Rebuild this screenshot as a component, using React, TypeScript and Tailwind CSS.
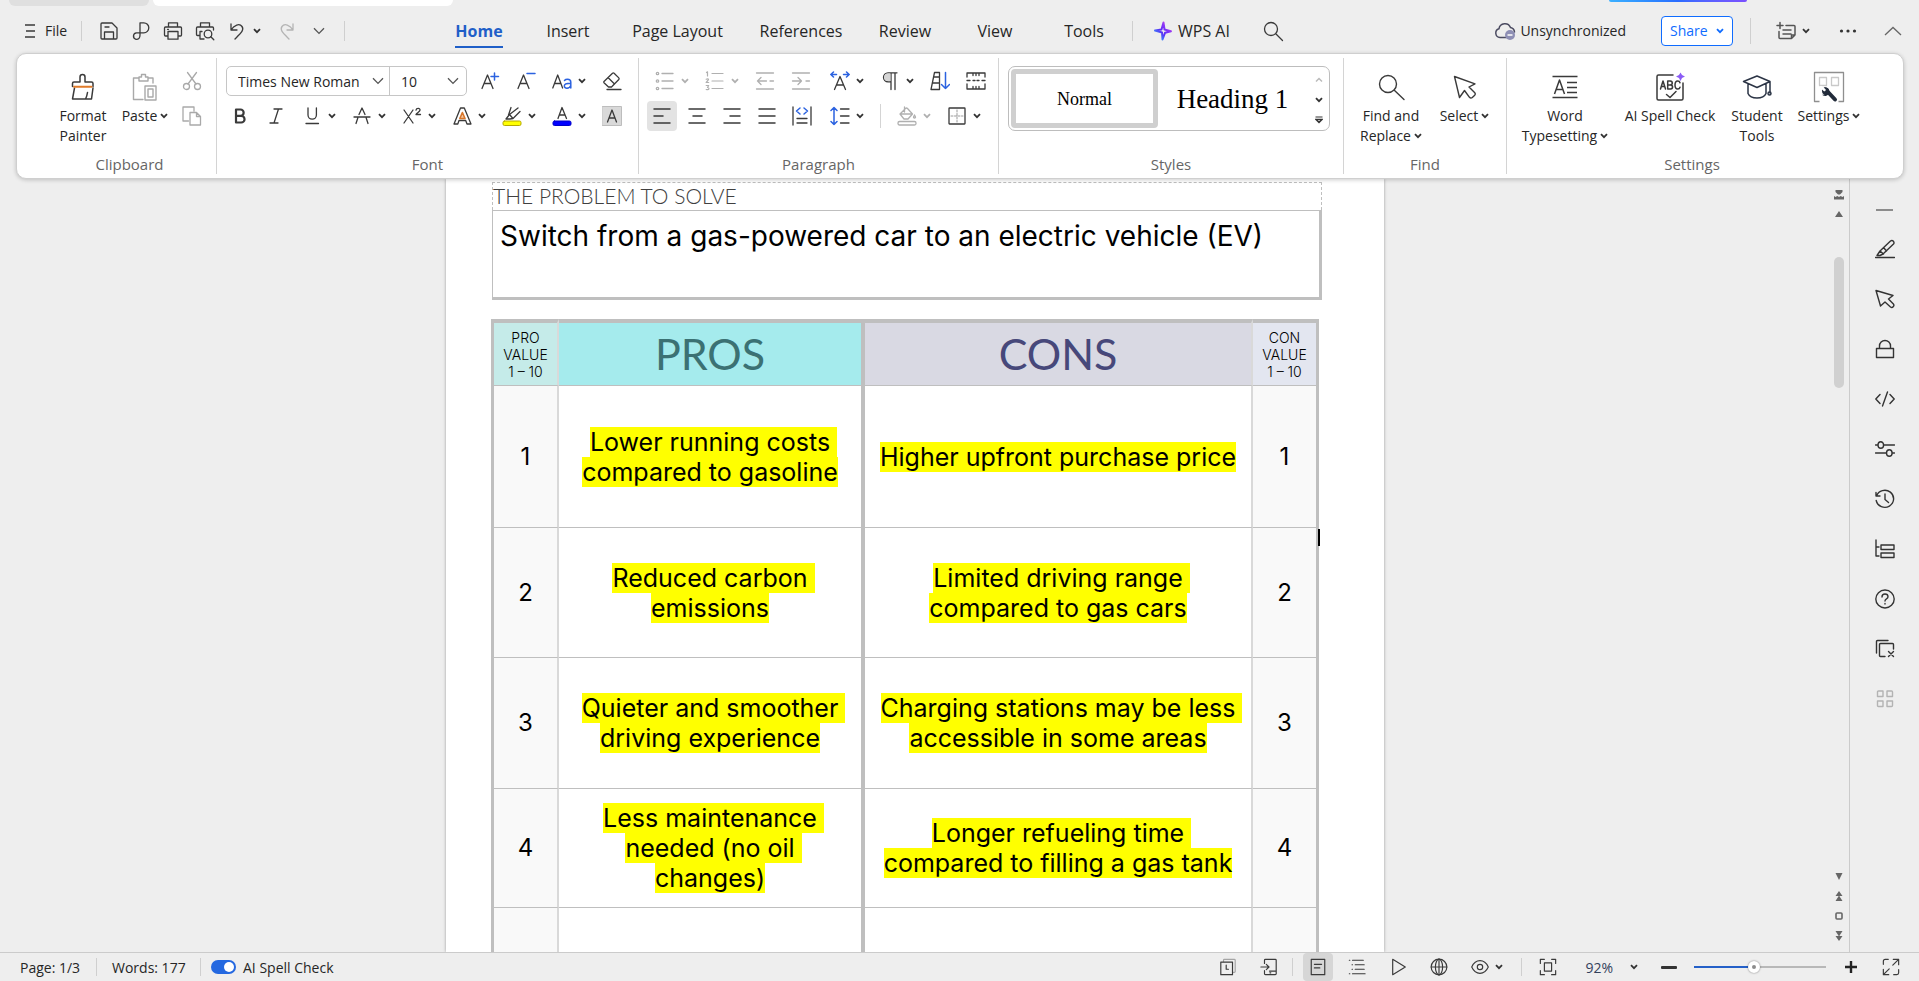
import React from "react";
import type { ReactNode } from "react";

type IconProps = {
  size?: number;
  vb?: number;
  sw?: number;
  className?: string;
  children: ReactNode;
};

function Icon({ size = 20, vb = 20, sw = 1.3, className = "text-[#3a3a3a]", children }: IconProps) {
  return (
    <svg
      width={size}
      height={size}
      viewBox={`0 0 ${vb} ${vb}`}
      fill="none"
      stroke="currentColor"
      strokeWidth={sw}
      strokeLinecap="round"
      strokeLinejoin="round"
      className={`shrink-0 ${className}`}
      aria-hidden="true"
    >
      {children}
    </svg>
  );
}

function Chevron({ className = "text-[#333]" }: { className?: string }) {
  return (
    <svg width="8" height="6" viewBox="0 0 8 6" fill="none" stroke="currentColor" strokeWidth="1.8" className={`shrink-0 ${className}`} aria-hidden="true">
      <path d="M1 1.2 4 4.2 7 1.2" />
    </svg>
  );
}

function WideChevron({ className = "" }: { className?: string }) {
  return (
    <svg width="12" height="8" viewBox="0 0 12 8" fill="none" stroke="#555" strokeWidth="1.3" className={`shrink-0 ${className}`} aria-hidden="true">
      <path d="M1 1.2 6 6.4 11 1.2" />
    </svg>
  );
}

function Tool({ label, drop = false, dim = false, children }: { label: string; drop?: boolean; dim?: boolean; children: ReactNode }) {
  return (
    <button type="button" aria-label={label} className="flex h-[30px] shrink-0 items-center gap-[6px]">
      {children}
      {drop && <Chevron className={dim ? "text-[#b0b0b0]" : "text-[#333]"} />}
    </button>
  );
}

function BigButton({ icon, lines, drop = false, width }: { icon: ReactNode; lines: string[]; drop?: boolean; width: string }) {
  return (
    <button type="button" className={`flex shrink-0 flex-col items-center gap-[3px] pt-[5px] text-[14px] leading-5 text-[#262626] ${width}`}>
      <span className="flex h-8 items-center">{icon}</span>
      <span className="flex flex-col items-center whitespace-nowrap">
        {lines.map((line, i) => (
          <span key={line} className="flex items-center gap-[3px]">
            {line}
            {drop && i === lines.length - 1 && <Chevron />}
          </span>
        ))}
      </span>
    </button>
  );
}

function Group({ label, className, labelClass = "", last = false, children }: { label: string; className: string; labelClass?: string; last?: boolean; children: ReactNode }) {
  return (
    <section aria-label={label} className={`my-1 flex shrink-0 flex-col pt-2 ${last ? "" : "border-r border-[#d4d4d4]"} ${className}`}>
      {children}
      <div className={`mt-auto text-center text-[15px] leading-5 text-[#666] ${labelClass}`}>{label}</div>
    </section>
  );
}

const tabs: [string, string][] = [
  ["Insert", "w-[88px]"],
  ["Page Layout", "w-[131px]"],
  ["References", "w-[116px]"],
  ["Review", "w-[92px]"],
  ["View", "w-[88px]"],
  ["Tools", "w-[90px]"],
];

function MenuBar() {
  return (
    <div className="flex h-[47px] items-center pt-[2px] pr-[17px] text-[#262626]">
      <div className="flex w-[434px] shrink-0 items-center pl-5">
        <button type="button" className="flex items-center gap-[5px] text-[14px]">
          <Icon sw={1.5}>
            <path d="M5 4h10M6 10h9M5 16h10" strokeLinecap="butt" />
          </Icon>
          File
        </button>
        <span className="ml-[14px] h-5 w-px bg-[#cfcfcf]" />
        <div className="ml-[17px] flex items-center gap-3">
          <button type="button" aria-label="Save">
            <Icon>
              <path d="M2 17V3q0-1 1-1h10l5 5v10q0 1-1 1H3q-1 0-1-1ZM5.500 18v-7h9v7M6 6h4" />
            </Icon>
          </button>
          <button type="button" aria-label="Export to PDF">
            <Icon>
              <path d="M9 14V1.800h3.800a5 5 0 0 1 0 10H5.500a3.300 3.300 0 0 0-.500 6.500Q9 18.500 9 14M3 16v.500" />
            </Icon>
          </button>
          <button type="button" aria-label="Print">
            <Icon>
              <path d="M5.500 6V1.800h9V6M5 15H2.500q-1 0-1-1V7q0-1 1-1h15q1 0 1 1v7q0 1-1 1H15M5 10.500h10v7.700H5ZM4.500 8.300h1" />
            </Icon>
          </button>
          <button type="button" aria-label="Print preview">
            <Icon>
              <path d="M5.500 6V1.800h9V6M4.500 14.500H2.500q-1 0-1-1V7q0-1 1-1h15q1 0 1 1v2M5 18V10.500h2M5 18h4" />
              <circle cx="13" cy="13" r="3.800" />
              <path d="m15.800 15.800 3 3" />
            </Icon>
          </button>
          <button type="button" aria-label="Undo" className="flex items-center gap-[6px]">
            <Icon>
              <path d="M4 3v6h6M4 9C7 4 12.500 2 15 5.500S14 12 8 18" />
            </Icon>
            <Chevron />
          </button>
        </div>
        <button type="button" aria-label="Redo" className="ml-4">
          <Icon className="text-[#b4b4b4]">
            <path d="M16 3v6h-6M16 9C13 4 7.500 2 5 5.500S6 12 12 18" />
          </Icon>
        </button>
        <button type="button" aria-label="More commands" className="ml-[16px]">
          <WideChevron />
        </button>
        <span className="ml-[19px] h-5 w-px bg-[#cfcfcf]" />
      </div>
      <nav className="flex items-center text-[16px]" aria-label="Ribbon tabs">
        <button type="button" className="flex w-[90px] justify-center font-bold text-[#1f5fc8]">
          <span className="border-b-2 border-[#1f5fc8] pt-[5px] pb-[3px]">Home</span>
        </button>
        {tabs.map(([t, w]) => (
          <button type="button" key={t} className={`whitespace-nowrap ${w}`}>
            {t}
          </button>
        ))}
      </nav>
      <span className="ml-[3px] h-5 w-px bg-[#cfcfcf]" />
      <button type="button" className="ml-5 flex shrink-0 items-center gap-[5px] text-[16px]">
        <svg width="20" height="20" viewBox="0 0 20 20" aria-hidden="true" fill="none">
          <defs>
            <linearGradient id="spark" x1="0" y1="1" x2="1" y2="0">
              <stop offset="0" stopColor="#2fc4ff" />
              <stop offset="0.450" stopColor="#5b2cf5" />
              <stop offset="0.700" stopColor="#8a35f7" />
              <stop offset="1" stopColor="#ff6bd0" />
            </linearGradient>
          </defs>
          <path d="M10.500 1.500 8.500 8.500 2 9.500 9 11.500 9.500 18.500 12 11.800 18 10.200 11.500 8.500Z" stroke="url(#spark)" strokeWidth="2" strokeLinejoin="round" />
        </svg>
        WPS AI
      </button>
      <button type="button" aria-label="Search" className="ml-8">
        <Icon size={22} vb={22}>
          <circle cx="9" cy="9" r="6.500" />
          <path d="m14 14 6.500 6.500" />
        </Icon>
      </button>
      <div className="ml-auto flex items-center text-[14px]">
        <button type="button" className="flex items-center gap-1">
          <svg width="22" height="20" viewBox="0 0 22 20" fill="none" aria-hidden="true">
            <path d="M12 16.500H6A4.500 4.500 0 0 1 5 7.700 6 6 0 0 1 16.500 6.500 5 5 0 0 1 20.500 11" stroke="#4a4a60" strokeWidth="1.500" strokeLinecap="round" />
            <circle cx="16" cy="14" r="5" fill="#8e8fb5" />
            <path d="M13.500 14h5" stroke="#fff" strokeWidth="1.500" />
          </svg>
          Unsynchronized
        </button>
        <button type="button" className="ml-[35px] flex h-[30px] w-[72px] items-center justify-between rounded-[4px] border border-[#0f6cff] bg-white px-[8px] text-[#0f6cff]">
          Share
          <Chevron className="text-[#0f6cff]" />
        </button>
        <span className="ml-[17px] h-[26px] w-px bg-[#cfcfcf]" />
        <button type="button" aria-label="Notes" className="ml-[25px] flex items-center gap-[6px]">
          <Icon className="text-[#555]" sw={1.5}>
            <path d="M1 4.500h6M4 1.500v6M10 4.500h8q1 0 1 1V14l-3.500 3.500H4q-1 0-1-1V10.500M7 9h8M7 13h8M19 14h-3.500v3.500" />
          </Icon>
          <Chevron />
        </button>
        <button type="button" aria-label="More" className="ml-[29px]">
          <svg width="18" height="4" viewBox="0 0 18 4" fill="#333" aria-hidden="true">
            <circle cx="2.500" cy="2" r="1.600" />
            <circle cx="9" cy="2" r="1.600" />
            <circle cx="15.500" cy="2" r="1.600" />
          </svg>
        </button>
        <button type="button" aria-label="Collapse ribbon" className="ml-[27px]">
          <svg width="18" height="10" viewBox="0 0 18 10" fill="none" stroke="#666" strokeWidth="1.300" aria-hidden="true">
            <path d="m1 9 8-7.500L17 9" />
          </svg>
        </button>
      </div>
    </div>
  );
}

function ClipboardGroup() {
  return (
    <Group label="Clipboard" className="w-[200px]" labelClass="pl-[26px]">
      <div className="flex gap-[14px] pl-[41px]">
        <BigButton
          width="w-[50px]"
          lines={["Format", "Painter"]}
          icon={
            <Icon size={28} vb={28} sw={1.5}>
              <path d="M3.500 13.500V10.500q0-1.500 1.500-1.500h6V4a2.500 2.500 0 0 1 5 0v5h6.500q1.500 0 1.500 1.500v3M5.500 15 3.500 26h19l1.500-11M16.500 26q1.500-3 2-6.500" />
              <path d="M5 13.700h17.500" stroke="#e07b2a" strokeWidth="2" />
            </Icon>
          }
        />
        <BigButton
          width="w-[46px]"
          lines={["Paste"]}
          drop
          icon={
            <Icon size={28} vb={28} sw={1.4} className="text-[#a9a9a9]">
              <path d="M7 5H2.500v21.500H12M17.500 5H22v5M8 8V4h2.500V1.500h4V4H17v4ZM14 13h11v14H14ZM17 16h5v8h-5Z" />
            </Icon>
          }
        />
        <div className="flex flex-col gap-[5px]">
          <Tool label="Cut">
            <Icon className="text-[#a9a9a9]">
              <circle cx="4.500" cy="15.500" r="3" />
              <circle cx="15.500" cy="15.500" r="3" />
              <path d="M5.500 1.500 14 13M14.500 1.500 6 13" />
            </Icon>
          </Tool>
          <Tool label="Copy">
            <Icon className="text-[#a9a9a9]">
              <path d="M6.500 15H1V1h11v4M8 6.500h6.500l4 4V19H8ZM14.500 6.500v4h4" />
            </Icon>
          </Tool>
        </div>
      </div>
    </Group>
  );
}

function FontGroup() {
  return (
    <Group label="Font" className="w-[422px]">
      <div className="flex items-center gap-4 pl-[9px]">
        <div className="-mr-[3px] flex h-[30px] w-[241px] items-center rounded-[5px] border border-[#c6c6c6] bg-white text-[14px] text-[#262626]">
          <div className="relative flex h-full w-[163px] items-center border-r border-[#c6c6c6]">
            <select aria-label="Font" className="h-full w-full appearance-none bg-transparent pl-[11px] outline-none">
              <option>Times New Roman</option>
            </select>
            <WideChevron className="pointer-events-none absolute right-[5px]" />
          </div>
          <div className="relative flex h-full flex-1 items-center">
            <select aria-label="Font size" className="h-full w-full appearance-none bg-transparent pl-[11px] outline-none">
              <option>10</option>
            </select>
            <WideChevron className="pointer-events-none absolute right-[7px]" />
          </div>
        </div>
        <Tool label="Grow font">
          <Icon>
            <path d="M2 17.500 7.500 4 13 17.500M4 12.500h7" />
            <path d="M14.500 2v7M11 5.500h7.500" stroke="#2b62e0" strokeWidth="1.500" />
          </Icon>
        </Tool>
        <Tool label="Shrink font">
          <Icon>
            <path d="M2 17.500 7.500 4 13 17.500M4 12.500h7" />
            <path d="M11 2.500h8" stroke="#2b62e0" strokeWidth="1.500" />
          </Icon>
        </Tool>
        <Tool label="Change case" drop>
          <Icon>
            <path d="M.800 17 5.700 4l4.900 13M2.600 12.500h6.200" />
            <path d="M12.500 9.500q1-1.200 3-1.200 3.300 0 3.300 3V17M18.800 12.300c-4 0-6.500.500-6.500 2.700 0 3 5 3 6.500-.500" stroke="#2b62e0" strokeWidth="1.500" />
          </Icon>
        </Tool>
        <Tool label="Clear formatting">
          <Icon>
            <path d="m2 10.500 8.500-8.300q.800-.700 1.600 0l4.700 4.700q.700.800 0 1.600L9.500 16H6.500L2 11.800q-.600-.600 0-1.300ZM6 6.500l6.500 6.500M5 18.500h14" />
          </Icon>
        </Tool>
      </div>
      <div className="mt-[5px] flex items-center gap-4 pl-[13px]">
        <Tool label="Bold">
          <Icon sw={2.2}>
            <path d="M6 3.500h4.500a3 3 0 0 1 0 6.300H6ZM6 9.800h5.200a3.300 3.300 0 0 1 0 6.700H6Z" />
          </Icon>
        </Tool>
        <Tool label="Italic">
          <Icon>
            <path d="M8 3h8M4 17h8M12.500 3l-4.500 14" />
          </Icon>
        </Tool>
        <Tool label="Underline" drop>
          <Icon>
            <path d="M6 2v7a4.200 4.200 0 0 0 8.400 0V2M4 17.500h12.500" />
          </Icon>
        </Tool>
        <Tool label="Strikethrough" drop>
          <Icon>
            <path d="M7 8.500 10 2l3 6.500M2 11h16M5.800 12 4 17.500M14.200 12l1.800 5.500" />
          </Icon>
        </Tool>
        <Tool label="Superscript" drop>
          <Icon>
            <path d="m2 4 9 13M11 4 2 17M14 4.200c.500-2.700 4.300-2.300 4 0-.200 1.800-3.500 2.500-4 4.300h4.500" />
          </Icon>
        </Tool>
        <Tool label="Text effects" drop>
          <Icon>
            <path d="M8.500 2h3.800L19 18h-4l-1.300-3.500H7L5.800 18H2Z" />
            <path d="m10.400 6.500 2.600 6H7.800Z" stroke="#d9772b" strokeWidth="1.600" fill="#f5c9a5" />
          </Icon>
        </Tool>
        <Tool label="Highlight colour" drop>
          <Icon>
            <path d="M4 13 7.500 8.500 16 2M7.500 8.500l3.500 4L18 5.500M4 13h4l3-.500M9 1.500 6.500 9" />
            <rect x="1" y="15" width="18" height="4.500" rx="1.500" fill="#ffff00" stroke="#b5a800" strokeWidth="1" />
          </Icon>
        </Tool>
        <Tool label="Font colour" drop>
          <Icon>
            <path d="M6 12.500 10 1.500l4.500 11M7.500 9h5.500" />
            <rect x="1" y="15" width="18" height="4.500" rx="1.500" fill="#0000ff" stroke="#0000c8" strokeWidth="1" />
          </Icon>
        </Tool>
        <Tool label="Character shading">
          <Icon>
            <rect x=".500" y=".500" width="19" height="19" fill="#d9d9d9" stroke="#bdbdbd" strokeWidth="1" />
            <path d="M5.500 16 10 4l4.500 12M7 12h6" />
          </Icon>
        </Tool>
      </div>
    </Group>
  );
}

const alignments: [string, string][] = [
  ["Align left", "M2 3h16M2 10h9M2 17h16"],
  ["Centre", "M2 3h16M6 10h9M2 17h16"],
  ["Align right", "M2 3h16M8 10h10M2 17h16"],
  ["Justify", "M2 3h16M2 10h16M2 17h16"],
];

function ParagraphGroup() {
  return (
    <Group label="Paragraph" className="w-[360px]">
      <div className="flex items-center gap-4 pl-4">
        <Tool label="Bullets" drop dim>
          <Icon className="text-[#b0b0b0]">
            <path d="M7 2.500h11M7 10h11M7 17.500h11" />
            <circle cx="2.500" cy="2.500" r="1.200" />
            <circle cx="2.500" cy="10" r="1.200" />
            <circle cx="2.500" cy="17.500" r="1.200" />
          </Icon>
        </Tool>
        <Tool label="Numbering" drop dim>
          <Icon className="text-[#b0b0b0]" sw={1.2}>
            <path d="M7 2.500h11M7 10h11M7 17.500h11M1.500 1.500l1-.700V5M1.200 8.200q2.300-1 2.300.500L1.200 11.500h2.500M1.200 14.500h2.500l-1.200 2q1.500 0 1.500 1.200-.500 1.500-2.800.800" />
          </Icon>
        </Tool>
        <Tool label="Decrease indent">
          <Icon className="text-[#b0b0b0]">
            <path d="M1.500 2h17M1.500 18h17M11.500 10H2.500M6 6.500 2.500 10 6 13.500M15 10h3.500" />
          </Icon>
        </Tool>
        <Tool label="Increase indent">
          <Icon className="text-[#b0b0b0]">
            <path d="M1.500 2h17M1.500 18h17M1.500 10h9M7 6.500l3.500 3.500L7 13.500M15 10h3.500" />
          </Icon>
        </Tool>
        <div className="ml-[3px] flex items-center gap-4">
          <Tool label="Text scaling" drop>
            <Icon>
              <path d="M4.500 18.500 10 5.500l5.500 13M6.500 14h7" />
              <path d="M6.500 3.500H.800M3.500 1 .800 3.500 3.500 6M13.500 3.500h5.700M16.500 1l2.700 2.500L16.500 6" stroke="#2b62e0" strokeWidth="1.500" />
            </Icon>
          </Tool>
          <Tool label="Paragraph marks" drop>
            <Icon>
              <path d="M11 18.500V1.800M15 18.500V1.800M17 1.800H8a4.500 4.500 0 0 0 0 9h3" />
              <path d="M10.500 2.500H8a3.800 3.800 0 0 0 0 7.600h2.500Z" fill="#d5d5d5" stroke="none" />
            </Icon>
          </Tool>
          <Tool label="Sort">
            <Icon>
              <path d="M1 18.500 4.500 1.500h5v17ZM4 6h5.500M3 12h6.500" />
              <path d="M15.500 1.500v16M11.500 13.500l4 4 4-4" stroke="#2b62e0" strokeWidth="1.500" />
            </Icon>
          </Tool>
          <Tool label="Tabs">
            <Icon>
              <path d="M1 6V2h18v4M1 13v5h18v-5M1 9.500h3M7 9.500h2M11 9.500h2M16 9.500h3M7 2v2.500M13 2v2.500M7 18v-2.500M10 18v-2.500M13 18v-2.500M10 2v2.500" />
            </Icon>
          </Tool>
        </div>
      </div>
      <div className="mt-[5px] flex items-center gap-[5px] pl-[8px]">
        {alignments.map(([name, d], i) => (
          <button
            type="button"
            key={name}
            aria-label={name}
            aria-pressed={i === 0}
            className={`flex size-[30px] items-center justify-center rounded-[4px] ${i === 0 ? "bg-[#e3e3e3]" : ""}`}
          >
            <Icon sw={1.5}>
              <path d={d} />
            </Icon>
          </button>
        ))}
        <button type="button" aria-label="Distribute" className="flex size-[30px] items-center justify-center">
          <Icon>
            <path d="M1 1v18M19 1v18M5 12.500h10M5 17h10" />
            <path d="M8 2 4.500 5 8 8M12 2l3.500 3L12 8" stroke="#2b62e0" strokeWidth="1.500" />
          </Icon>
        </button>
        <div className="ml-2 flex items-center gap-4">
          <Tool label="Line spacing" drop>
            <Icon>
              <path d="M10.500 3h8.500M10.500 10h8.500M10.500 17h8.500" />
              <path d="M4 1.500v17M1 4.500l3-3 3 3M1 15.500l3 3 3-3" stroke="#2b62e0" strokeWidth="1.500" />
            </Icon>
          </Tool>
          <span className="h-6 w-px bg-[#d4d4d4]" />
          <Tool label="Shading" drop dim>
            <Icon className="text-[#b0b0b0]">
              <path d="M8.500 2.500 3 8l4 5h4l4.500-5-5-5.500q-1-1-2 0ZM7.500 1v5M4 8h11M17.500 9q2 3 0 3t0-3" />
              <rect x="1" y="15.500" width="18" height="3.500" rx="1.500" />
            </Icon>
          </Tool>
          <Tool label="Borders" drop>
            <Icon>
              <rect x="2" y="2" width="16" height="16" rx=".500" />
              <path d="M10 4v12M4 10h12" stroke="#9a9a9a" strokeWidth="1" strokeDasharray="2 1.500" />
            </Icon>
          </Tool>
        </div>
      </div>
    </Group>
  );
}

function StylesGroup() {
  return (
    <Group label="Styles" className="w-[345px]">
      <div className="ml-[9px] flex h-[65px] w-[322px] rounded-[7px] border border-[#bdbdbd] p-[2px] font-['Liberation_Serif',serif] text-black">
        <button type="button" className="w-[147px] rounded-[4px] border-[5px] border-[#cfcfcf] pt-[2px] text-[18px]">
          Normal
        </button>
        <button type="button" className="w-[149px] pt-[2px] text-[27px] whitespace-nowrap">
          Heading 1
        </button>
        <div className="flex flex-1 flex-col items-center justify-between pt-[8px] pb-[4px] pl-[3px]">
          <button type="button" aria-label="Previous styles">
            <svg width="8" height="6" viewBox="0 0 8 6" fill="none" stroke="#bbb" strokeWidth="1.500" aria-hidden="true">
              <path d="M1 4.500 4 1.500l3 3" />
            </svg>
          </button>
          <button type="button" aria-label="Next styles" className="flex h-2 items-center">
            <Chevron />
          </button>
          <button type="button" aria-label="All styles">
            <svg width="8" height="8" viewBox="0 0 8 8" fill="none" stroke="#333" strokeWidth="1.500" aria-hidden="true">
              <path d="M.500 1h7" stroke="#777" />
              <path d="M1 3.500h6l-3 3Z" />
            </svg>
          </button>
        </div>
      </div>
    </Group>
  );
}

function FindGroup() {
  return (
    <Group label="Find" className="w-[163px]">
      <div className="flex gap-[16px] pl-[16px]">
        <BigButton
          width="w-[62px]"
          lines={["Find and", "Replace"]}
          drop
          icon={
            <Icon size={28} vb={28} sw={1.4}>
              <circle cx="11" cy="11" r="8.500" />
              <path d="M17.300 17.300 27 26.500" />
            </Icon>
          }
        />
        <BigButton
          width="w-[53px]"
          lines={["Select"]}
          drop
          icon={
            <Icon size={28} vb={28} sw={1.4}>
              <path d="m3.500 3.500 5 21 5-7 5 6.800q1.300 1.500 2.800.200l2.400-2.200q1.200-1.300.100-2.600L18 14l6-3.200Z" />
            </Icon>
          }
        />
      </div>
    </Group>
  );
}

function SettingsGroup() {
  return (
    <Group label="Settings" className="w-[370px]" last>
      <div className="flex gap-[14px] pl-[14px]">
        <BigButton
          width="w-[88px]"
          lines={["Word", "Typesetting"]}
          drop
          icon={
            <Icon size={28} vb={28} sw={1.5}>
              <path d="M1.500 3.500h25M1.500 24.500h25M3.500 21 8.500 7l5 14M5.300 16.500h6.400M16 9.500h10M16 14.500h10M16 19.500h10" strokeLinecap="butt" />
            </Icon>
          }
        />
        <BigButton
          width="w-[94px]"
          lines={["AI Spell Check"]}
          icon={
            <Icon size={30} vb={30} sw={1.5}>
              <path d="M18 3H3.500Q2 3 2 4.500v22Q2 28 3.500 28h23q1.500 0 1.500-1.500V11M11.500 22.500l3.500 3 6-6" />
              <path d="M5.500 17 8 9l2.500 8M6.200 14.500h3.600M12.700 9h2.600q2 .200 2 2t-2 2h-2.600ZM12.700 13h2.900q2 .200 2 2t-2 2h-2.900ZM25 10.800q-.500-1.800-2.200-1.800Q20 9 20 13t2.800 4q1.700 0 2.200-1.800" />
              <path d="M25.500.500 27 3l3 1.500L27 6l-1.500 3L24 6l-3-1.500L24 3Z" fill="#8b5cf6" stroke="none" />
            </Icon>
          }
        />
        <BigButton
          width="w-[52px]"
          lines={["Student", "Tools"]}
          icon={
            <Icon size={30} vb={30} sw={1.5} className="text-[#2b3445]">
              <path d="M15 4 28 9.500 15 15.500 1.500 9.500ZM6 12v9.500q2 4.500 9 4.500t9-4.500V12M28 9.500V21" />
              <circle cx="27.500" cy="21.500" r="1.500" />
            </Icon>
          }
        />
        <BigButton
          width="w-[64px]"
          lines={["Settings"]}
          drop
          icon={
            <Icon size={32} vb={32} sw={1.3} className="text-[#8f8f8f]">
              <path d="M6.500 30.500H1.500v-29h29v29h-5" strokeLinecap="butt" />
              <path d="M6.500 6.500h7v8h-7ZM18.500 6.500h7v8h-7Z" stroke="#c9c9c9" />
              <path d="m14.500 20.500 7.500 8" stroke="#222b3a" strokeWidth="4" />
              <path d="M11 16.500a4.300 4.300 0 1 1-1.800 7.300l1.800-.300 1.300-1.300-.500-2.200-2 .300-1-.800Z" fill="#222b3a" stroke="none" />
              <circle cx="12.500" cy="20" r="3.500" fill="#222b3a" stroke="none" />
              <path d="m8 16 3.500 3" stroke="#fff" strokeWidth="2.500" />
            </Icon>
          }
        />
      </div>
    </Group>
  );
}

type Row = { n: number; height: string; pro: string[]; con: string[] };

const rows: Row[] = [
  { n: 1, height: "h-[142px]", pro: ["Lower running costs", "compared to gasoline"], con: ["Higher upfront purchase price"] },
  { n: 2, height: "h-[130px]", pro: ["Reduced carbon", "emissions"], con: ["Limited driving range", "compared to gas cars"] },
  { n: 3, height: "h-[131px]", pro: ["Quieter and smoother", "driving experience"], con: ["Charging stations may be less", "accessible in some areas"] },
  { n: 4, height: "h-[119px]", pro: ["Less maintenance", "needed (no oil", "changes)"], con: ["Longer refueling time", "compared to filling a gas tank"] },
];

function Marked({ lines }: { lines: string[] }) {
  return (
    <div className="flex flex-col items-center text-[25px] leading-[30px] whitespace-nowrap text-black">
      {lines.map((line, i) => (
        <mark key={line} className={`bg-[#ffff00] text-black ${i < lines.length - 1 ? "-mr-[7px] pr-[7px]" : ""}`}>
          {line}
        </mark>
      ))}
    </div>
  );
}

function DocumentPage() {
  return (
    <article className="w-[938px] shrink-0 bg-white pt-[3px] pr-[62px] pl-[45px] font-['Inter',sans-serif] shadow-[0_0_3px_rgba(0,0,0,0.35)]">
      <h2 className="ml-px h-7 border border-b-0 border-dashed border-[#bfbfbf] font-['Lato',sans-serif] text-[21px] leading-[25px] font-light text-[#404040]">
        THE PROBLEM TO SOLVE
      </h2>
      <p className="ml-px h-[90px] border border-r-[3px] border-b-[3px] border-[#bfbfbf] pt-[6px] pl-[7px] text-[28px] leading-[38px] text-black">
        Switch from a gas-powered car to an electric vehicle (EV)
      </p>
      <div className="relative mt-[19px] w-[828px]">
        <table className="w-full table-fixed border-separate border-spacing-0 text-center">
          <colgroup>
            <col className="w-[68px]" />
            <col className="w-[306px]" />
            <col />
            <col className="w-[66px]" />
          </colgroup>
          <thead>
            <tr className="h-[67px]">
              <th className="border-t-4 border-r-2 border-b border-l-[3px] border-[#bfbfbf] border-r-[#d9d9d9] bg-[#c5ebe9] p-0 text-[14px] leading-[17px] font-light">
                PRO
                <br />
                VALUE
                <br />1 – 10
              </th>
              <th className="border-t-4 border-r-4 border-b border-[#bfbfbf] bg-[#a5ebed] p-0 font-['Lato',sans-serif] text-[43px] leading-[50px] font-normal text-[#3b7173]">PROS</th>
              <th className="border-t-4 border-r-2 border-b border-[#bfbfbf] border-r-[#d9d9d9] bg-[#d9d9e3] p-0 font-['Lato',sans-serif] text-[43px] leading-[50px] font-normal text-[#47487a]">CONS</th>
              <th className="border-t-4 border-r-[3px] border-b border-[#bfbfbf] bg-[#e3e6f0] p-0 text-[14px] leading-[17px] font-light">
                CON
                <br />
                VALUE
                <br />1 – 10
              </th>
            </tr>
          </thead>
          <tbody>
            {rows.map((r) => (
              <tr key={r.n} className={r.height}>
                <td className="border-r-2 border-b border-l-[3px] border-[#bfbfbf] border-r-[#d9d9d9] bg-[#f9f9f9] p-0 text-[24px]">{r.n}</td>
                <td className="border-r-4 border-b border-[#bfbfbf] p-0">
                  <Marked lines={r.pro} />
                </td>
                <td className="border-r-2 border-b border-[#bfbfbf] border-r-[#d9d9d9] p-0">
                  <Marked lines={r.con} />
                </td>
                <td className="border-r-[3px] border-b border-[#bfbfbf] bg-[#f9f9f9] p-0 text-[24px]">{r.n}</td>
              </tr>
            ))}
            <tr className="h-[130px]">
              <td className="border-r-2 border-l-[3px] border-[#bfbfbf] border-r-[#d9d9d9] bg-[#f9f9f9]" />
              <td className="border-r-4 border-[#bfbfbf]" />
              <td className="border-r-2 border-[#d9d9d9]" />
              <td className="border-r-[3px] border-[#bfbfbf] bg-[#f9f9f9]" />
            </tr>
          </tbody>
        </table>
        <span className="absolute top-[210px] -right-px h-[17px] w-[2px] bg-black" />
      </div>
    </article>
  );
}

function ScrollColumn() {
  return (
    <div className="flex w-[19px] shrink-0 flex-col items-center pt-[11px] pr-px pb-[11px] text-[#666]">
      <svg width="10" height="10" viewBox="0 0 10 10" fill="currentColor" aria-hidden="true">
        <path d="M1.500 0h7v2L6 4.500H4L1.500 2ZM0 6l1.500 1L3.300 6 5 7l1.700-1 1.800 1L10 6v3.500H0Z" />
      </svg>
      <svg width="8" height="6" viewBox="0 0 8 6" fill="currentColor" className="mt-[11px]" aria-hidden="true">
        <path d="M4 0 8 6H0Z" />
      </svg>
      <div className="mt-10 h-[131px] w-[10px] rounded-[5px] bg-[#d0d0d0]" />
      <div className="mt-auto flex flex-col items-center gap-[11px]">
        <svg width="8" height="7" viewBox="0 0 8 7" fill="currentColor" aria-hidden="true">
          <path d="M.500 0h7L4 7Z" />
        </svg>
        <svg width="8" height="10" viewBox="0 0 8 10" fill="currentColor" aria-hidden="true">
          <path d="M4 0 7.500 5h-7ZM4 4.500 7.500 10h-7Z" />
        </svg>
        <svg width="8" height="8" viewBox="0 0 8 8" fill="none" stroke="currentColor" strokeWidth="1.600" aria-hidden="true">
          <rect x="1" y="1" width="6" height="6" rx="1" />
        </svg>
        <svg width="8" height="10" viewBox="0 0 8 10" fill="currentColor" aria-hidden="true">
          <path d="M.500 0h7L4 5.500ZM.500 5h7L4 10Z" />
        </svg>
      </div>
    </div>
  );
}

const sideTools: [string, ReactNode][] = [
  ["Edit", <path key="p" d="M.500 18.500h19M2 16.500l3-4.500L15.500 2q1.500-1 3 .300 1 1.500 0 2.700L8 15l-3 1.500ZM5 12l3.500 3M8.500 8.500 11.500 12" />],
  ["Select", <path key="p" d="M1 1.500 5.500 17l4.500-4 5.500 5q1.500 1 2.700-.300 1.300-1.200.200-2.700L13.500 10l4.500-3.500Z" />],
  ["Protect", <path key="p" d="M1.500 9.500h17v9h-17ZM4.500 9.500V7a5.500 5.500 0 0 1 11 0v2.500" />],
  ["Code", <path key="p" d="M5 5.500.800 10 5 14.500M15 5.500l4.200 4.500-4.200 4.500M12.500 3 7.500 17" />],
  ["Adjust", <path key="p" d="M.500 6H3M8.500 6h11M.500 14h11M17 14h2.500M3 6a2.800 3.300 0 1 0 5.600 0A2.800 3.300 0 1 0 3 6ZM11.500 14a2.800 3.300 0 1 0 5.600 0 2.800 3.300 0 1 0-5.600 0Z" />],
  ["History", <path key="p" d="M1 3.500V7h4M1.500 7A8.800 8.500 0 1 1 1.200 11.500M10 5v5.500l3.500 3" />],
  ["Outline", <path key="p" d="M1 1v16h3M1 8h3M6 6h13v4.500H6ZM6 14h13v4.500H6Z" />],
  ["Help", <path key="p" d="M.800 10a9.200 9 0 1 0 18.400 0A9.200 9 0 1 0 .800 10ZM7 8q0-3 3-3t3 2.700q0 1.300-1.500 2.100T10 12M10 14.500v.500" />],
  ["Close windows", <path key="p" d="M1.500 14V2.500q0-1 1-1H13M10 17.500H5.500q-1 0-1-1V5.500q0-1 1-1h12q1 0 1 1V10M13.500 12.500l5 5M18.500 12.500l-5 5" />],
  ["Apps", <path key="p" d="M3.500 2H8v5.500H2.500V3q0-1 1-1ZM12 2h4.500q1 0 1 1v4.500H12ZM2.500 12H8v5.500H3.500q-1 0-1-1ZM12 12h5.500v4.500q0 1-1 1H12Z" />],
];

function Sidebar() {
  return (
    <aside className="flex w-[70px] shrink-0 flex-col items-center border-l border-[#cbcbcb] pt-[30px]" aria-label="Side tools">
      <span className="h-[2px] w-[17px] bg-[#8c8c8c]" />
      <div className="mt-7 flex flex-col gap-[30px]">
        {sideTools.map(([name, drawing], i) => (
          <button type="button" key={name} aria-label={name}>
            <Icon sw={1.4} className={i === sideTools.length - 1 ? "text-[#b3b3b3]" : "text-[#333]"}>
              {drawing}
            </Icon>
          </button>
        ))}
      </div>
    </aside>
  );
}

function StatusBar() {
  return (
    <footer className="flex h-[29px] shrink-0 items-center border-t border-[#cbcbcb] bg-[#eee] pr-[19px] pl-5 text-[14px] whitespace-nowrap text-[#262626]">
      <span className="w-[76px]">Page: 1/3</span>
      <span className="h-[18px] w-px bg-[#cfcfcf]" />
      <span className="w-[103px] pl-[15px]">Words: 177</span>
      <span className="h-[18px] w-px bg-[#cfcfcf]" />
      <label className="ml-[10px] flex items-center gap-[7px]">
        <input
          type="checkbox"
          defaultChecked
          className="relative h-[14px] w-[25px] appearance-none rounded-full bg-[#2468e0] before:absolute before:top-[2px] before:right-[2px] before:size-[10px] before:rounded-full before:bg-white"
        />
        AI Spell Check
      </label>
      <div className="ml-auto flex h-full items-center">
        <button type="button" aria-label="Recent versions">
          <Icon size={18}>
            <path d="M5 4V2.500q0-1 1-1h11q1 0 1 1V15q0 1-1 1h-1" stroke="#a5a5a5" />
            <path d="M2 4.500h13v14H2ZM8 8v4.500h2.500" />
          </Icon>
        </button>
        <button type="button" aria-label="Send to phone" className="ml-[23px]">
          <Icon size={18}>
            <path d="M5 6V2.500q0-1 1-1h11q1 0 1 1v15q0 1-1 1H6q-1 0-1-1V14M1 10h9M7 7l3 3-3 3M10.500 14.500H18M11 16.500h1" />
          </Icon>
        </button>
        <span className="ml-[14px] h-[18px] w-px bg-[#cfcfcf]" />
        <button type="button" aria-label="Print layout" className="ml-[10px] flex h-full w-[30px] items-center justify-center rounded-[4px] bg-[#d6d6d6]">
          <Icon size={18}>
            <path d="M2.500 1.500h15v17h-15ZM6 7h8M6 11h6" />
          </Icon>
        </button>
        <button type="button" aria-label="Outline view" className="ml-[15px]">
          <Icon size={18}>
            <path d="M5 2.500h12M8 7.500h10M8 12.500h10M5 17.500h14M1.500 2.500h.500M4.500 7.500h.500M4.500 12.500h.500M1.500 17.500h.500" />
          </Icon>
        </button>
        <button type="button" aria-label="Read aloud" className="ml-[24px]">
          <Icon size={18}>
            <path d="M3 1.500v17l14-8.500Z" />
          </Icon>
        </button>
        <button type="button" aria-label="Web layout" className="ml-[22px]">
          <Icon size={18}>
            <circle cx="10" cy="10" r="8.700" />
            <ellipse cx="10" cy="10" rx="4" ry="8.700" />
            <path d="M1.300 10h17.400M10 1.300v17.400" />
          </Icon>
        </button>
        <button type="button" aria-label="Eye protection" className="ml-[23px] flex items-center gap-[6px]">
          <Icon size={18}>
            <path d="M.800 10Q4 3 10 3t9.200 7Q16 17 10 17T.800 10Z" />
            <circle cx="10" cy="10" r="3" />
          </Icon>
          <Chevron />
        </button>
        <span className="ml-[18px] h-[18px] w-px bg-[#cfcfcf]" />
        <button type="button" aria-label="Fit page" className="ml-[17px]">
          <Icon size={18}>
            <path d="M1.500 6V1.500H6M14 1.500h4.500V6M18.500 14v4.500H14M6 18.500H1.500V14M6 5.500h8v9H6Z" />
          </Icon>
        </button>
        <button type="button" className="ml-7 flex items-center gap-[17px] text-[#33415c]">
          92%
          <Chevron />
        </button>
        <button type="button" aria-label="Zoom out" className="ml-[23px] flex h-4 w-4 items-center">
          <span className="h-[3px] w-4 rounded-[1px] bg-[#333]" />
        </button>
        <input
          type="range"
          aria-label="Zoom"
          min={0}
          max={100}
          defaultValue={45}
          className="ml-[17px] h-3 w-[132px] appearance-none bg-[linear-gradient(90deg,#2460c8_45%,#b8b8b8_45%)] bg-[length:100%_2px] bg-center bg-no-repeat [&::-webkit-slider-thumb]:size-[12px] [&::-webkit-slider-thumb]:appearance-none [&::-webkit-slider-thumb]:rounded-full [&::-webkit-slider-thumb]:border-[4px] [&::-webkit-slider-thumb]:border-white [&::-webkit-slider-thumb]:bg-[#8c8c8c] [&::-webkit-slider-thumb]:shadow-[0_0_2px_rgba(0,0,0,0.5)]"
        />
        <button type="button" aria-label="Zoom in" className="ml-[18px]">
          <Icon size={14} vb={14} sw={2.4} className="text-[#222]">
            <path d="M7 1v12M1 7h12" strokeLinecap="butt" />
          </Icon>
        </button>
        <button type="button" aria-label="Full screen" className="ml-[24px]">
          <Icon size={18}>
            <path d="M1.500 7V3.500q0-2 2-2H7M12.500 1.500h6v6M18.500 1.500l-6.500 6.500M18.500 13v3.500q0 2-2 2H13M7.500 18.500h-6v-6M1.500 18.500 8 12" />
          </Icon>
        </button>
      </div>
    </footer>
  );
}

export default function App() {
  return (
    <div className="flex h-screen flex-col overflow-hidden bg-[#eeeeee] font-['Segoe_UI','Open_Sans',sans-serif]">
      <header className="relative z-10 shrink-0">
        <div className="flex h-[6px] items-start gap-1 pr-[172px] pl-[9px]">
          <span className="h-full w-[140px] rounded-b-[6px] bg-[#dfdfdf]" />
          <span className="h-full w-[300px] rounded-b-[6px] bg-white" />
          <span className="ml-auto h-[2px] w-[138px] rounded-b-[2px] bg-linear-to-r from-[#3db0ff] via-[#2a6cff] to-[#7a50ff]" />
        </div>
        <MenuBar />
        <div className="mr-[15px] ml-4 flex h-[126px] rounded-[10px] border border-[#cfcfcf] bg-white shadow-[0_1px_4px_rgba(0,0,0,0.2)]">
          <ClipboardGroup />
          <FontGroup />
          <ParagraphGroup />
          <StylesGroup />
          <FindGroup />
          <SettingsGroup />
        </div>
      </header>
      <div className="flex min-h-0 flex-1">
        <main className="flex min-w-0 flex-1 justify-center overflow-hidden">
          <DocumentPage />
        </main>
        <ScrollColumn />
        <Sidebar />
      </div>
      <StatusBar />
    </div>
  );
}
